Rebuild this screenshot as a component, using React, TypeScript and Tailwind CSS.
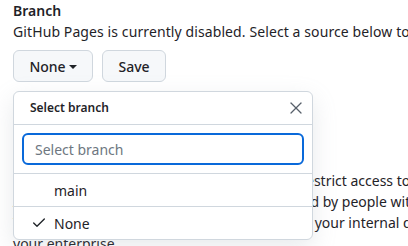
import { Check, X } from "lucide-react";

export default function App() {
  return (
    <main
      className="relative h-[246px] w-[408px] overflow-hidden bg-white pl-[13px] pt-[1px] text-[14px] text-[#1f2328]"
      style={{ fontFamily: '"Noto Sans", sans-serif' }}
    >
      {/* Branch section */}
      <h2 className="text-[14px] font-semibold leading-[20px]">Branch</h2>
      <p className="whitespace-nowrap leading-[21px] tracking-[0.1px]">
        GitHub Pages is currently disabled. Select a source below to enable GitHub Pages for this repository.
      </p>

      <div className="mt-[8px] flex gap-[9px]">
        <button className="flex h-[32px] w-[80px] items-center justify-center gap-[3px] rounded-md border border-[#d0d7de] bg-[#f6f8fa] text-[14px] font-medium">
          None
          <svg width="8" height="4" viewBox="0 0 8 4" className="mt-[1px]">
            <path d="M0 0h8L4 4z" fill="#1f2328" />
          </svg>
        </button>
        <button className="h-[32px] w-[64px] rounded-md border border-[#d0d7de] bg-[#f6f8fa] text-[14px] font-medium">
          Save
        </button>
      </div>

      {/* Text under the menu */}
      <div className="mt-[88px] whitespace-nowrap leading-[21px]">
        <div className="pl-[2px]">With a public repository, you can choose to restrict access to your site</div>
        <div>A privately published site can only be accessed by people with read access</div>
        <div>You can use privately published sites to share your internal docs with</div>
        <div>your enterprise.</div>
      </div>

      {/* Branch menu */}
      <div className="absolute left-[13px] top-[91px] w-[300px] rounded-md border border-[#d0d7de] bg-white shadow-[0_8px_24px_rgba(140,149,159,0.2)]">
        <div className="flex h-[33px] items-center justify-between border-b border-[#d0d7de] pl-[16px] pr-[6px]">
          <span className="text-[12px] font-semibold">Select branch</span>
          <X size={20} strokeWidth={1.5} className="text-[#57606a]" />
        </div>
        <div className="border-b border-[#d0d7de] px-[8px] py-[8px]">
          <div className="flex h-[32px] items-center rounded-md border-2 border-[#0969da] px-[11px] text-[14px] text-[#6e7781]">
            Select branch
          </div>
        </div>
        <div className="flex h-[33px] items-center border-b border-[#d0d7de] pl-[40px]">main</div>
        <div className="flex h-[32px] items-center pl-[17px]">
          <Check size={16} strokeWidth={2} className="mr-[7px] text-[#1f2328]" />
          None
        </div>
      </div>
    </main>
  );
}
